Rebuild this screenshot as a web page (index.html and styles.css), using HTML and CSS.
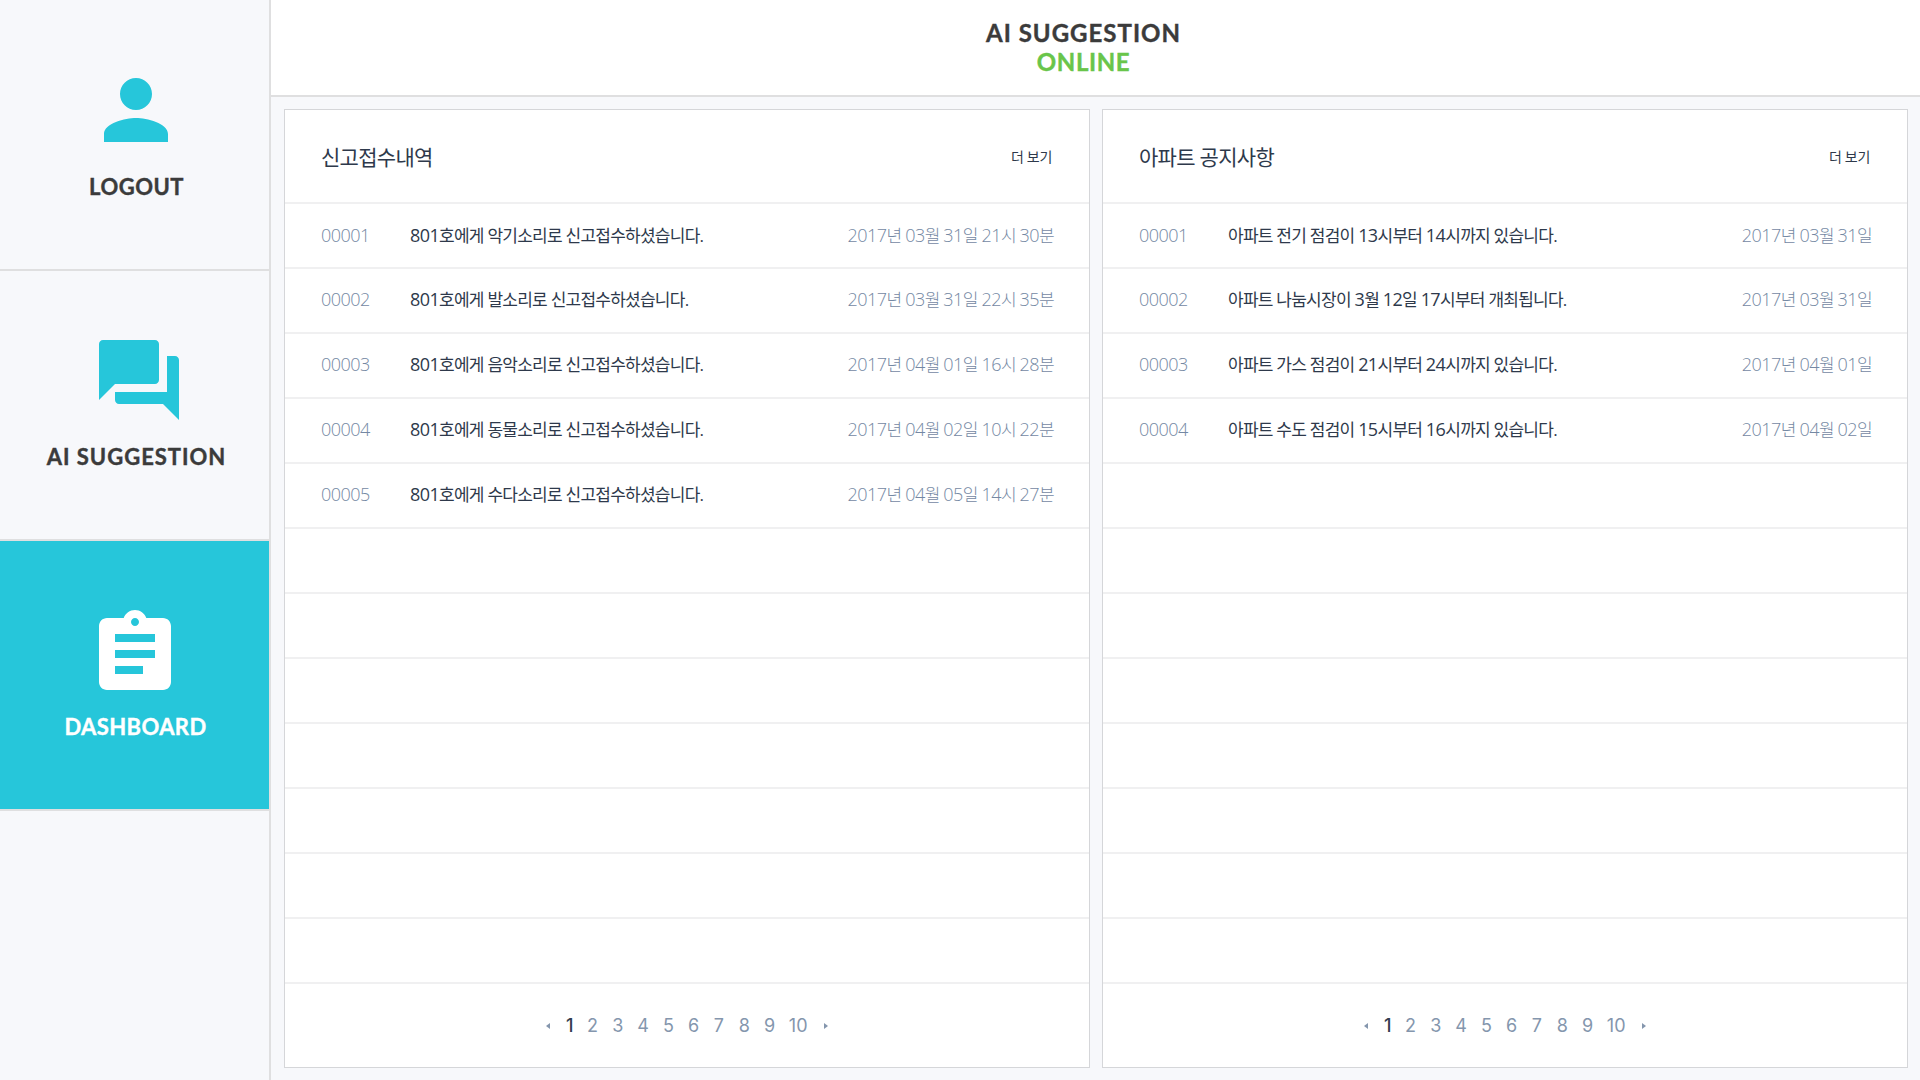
FILE: index.html
```html
<!DOCTYPE html>
<html lang="ko">
<head>
<meta charset="utf-8">
<title>AI Suggestion – Dashboard</title>
<link rel="stylesheet" href="styles.css">
</head>
<body>
<div class="app">
  <nav class="sidebar">
    <a class="nav-item nav-logout">
      <svg class="nav-icon" viewBox="0 0 24 24"><path d="M12 12c2.21 0 4-1.79 4-4s-1.79-4-4-4-4 1.79-4 4 1.79 4 4 4zm0 2c-2.67 0-8 1.34-8 4v2h16v-2c0-2.66-5.33-4-8-4z"/></svg>
      <span class="nav-label">LOGOUT</span>
    </a>
    <a class="nav-item nav-suggestion">
      <svg class="nav-icon" viewBox="0 0 24 24"><path d="M21 6h-2v9H6v2c0 .55.45 1 1 1h11l4 4V7c0-.55-.45-1-1-1zm-4 6V3c0-.55-.45-1-1-1H3c-.55 0-1 .45-1 1v14l4-4h10c.55 0 1-.45 1-1z"/></svg>
      <span class="nav-label">AI SUGGESTION</span>
    </a>
    <a class="nav-item nav-dashboard active">
      <svg class="nav-icon" viewBox="0 0 24 24"><path d="M19 3h-4.18C14.4 1.84 13.3 1 12 1c-1.3 0-2.4.84-2.82 2H5c-1.1 0-2 .9-2 2v14c0 1.1.9 2 2 2h14c1.1 0 2-.9 2-2V5c0-1.1-.9-2-2-2zm-7 0c.55 0 1 .45 1 1s-.45 1-1 1-1-.45-1-1 .45-1 1-1zm2 14H7v-2h7v2zm3-4H7v-2h10v2zm0-4H7V7h10v2z"/></svg>
      <span class="nav-label">DASHBOARD</span>
    </a>
  </nav>
  <div class="main">
    <header class="topbar">
      <div class="brand">AI SUGGESTION</div>
      <div class="status">ONLINE</div>
    </header>
    <main class="panels">
      <section class="panel">
        <div class="panel-head"><h2>신고접수내역</h2><a class="more">더 보기</a></div>
        <ul class="rows">
          <li><span class="no">00001</span><span class="subject"><b>801</b>호에게 악기소리로 신고접수하셨습니다.</span><span class="date"><b>2017</b>년 <b>03</b>월 <b>31</b>일 <b>21</b>시 <b>30</b>분</span></li>
          <li><span class="no">00002</span><span class="subject"><b>801</b>호에게 발소리로 신고접수하셨습니다.</span><span class="date"><b>2017</b>년 <b>03</b>월 <b>31</b>일 <b>22</b>시 <b>35</b>분</span></li>
          <li><span class="no">00003</span><span class="subject"><b>801</b>호에게 음악소리로 신고접수하셨습니다.</span><span class="date"><b>2017</b>년 <b>04</b>월 <b>01</b>일 <b>16</b>시 <b>28</b>분</span></li>
          <li><span class="no">00004</span><span class="subject"><b>801</b>호에게 동물소리로 신고접수하셨습니다.</span><span class="date"><b>2017</b>년 <b>04</b>월 <b>02</b>일 <b>10</b>시 <b>22</b>분</span></li>
          <li><span class="no">00005</span><span class="subject"><b>801</b>호에게 수다소리로 신고접수하셨습니다.</span><span class="date"><b>2017</b>년 <b>04</b>월 <b>05</b>일 <b>14</b>시 <b>27</b>분</span></li>
          <li></li><li></li><li></li><li></li><li></li><li></li><li></li>
        </ul>
        <div class="pager"><i class="prev"></i><a class="current">1</a><a>2</a><a>3</a><a>4</a><a>5</a><a>6</a><a>7</a><a>8</a><a>9</a><a class="wide">10</a><i class="next"></i></div>
      </section>
      <section class="panel">
        <div class="panel-head"><h2>아파트 공지사항</h2><a class="more">더 보기</a></div>
        <ul class="rows">
          <li><span class="no">00001</span><span class="subject">아파트 전기 점검이 <b>13</b>시부터 <b>14</b>시까지 있습니다.</span><span class="date"><b>2017</b>년 <b>03</b>월 <b>31</b>일</span></li>
          <li><span class="no">00002</span><span class="subject">아파트 나눔시장이 <b>3</b>월 <b>12</b>일 <b>17</b>시부터 개최됩니다.</span><span class="date"><b>2017</b>년 <b>03</b>월 <b>31</b>일</span></li>
          <li><span class="no">00003</span><span class="subject">아파트 가스 점검이 <b>21</b>시부터 <b>24</b>시까지 있습니다.</span><span class="date"><b>2017</b>년 <b>04</b>월 <b>01</b>일</span></li>
          <li><span class="no">00004</span><span class="subject">아파트 수도 점검이 <b>15</b>시부터 <b>16</b>시까지 있습니다.</span><span class="date"><b>2017</b>년 <b>04</b>월 <b>02</b>일</span></li>
          <li></li><li></li><li></li><li></li><li></li><li></li><li></li><li></li>
        </ul>
        <div class="pager"><i class="prev"></i><a class="current">1</a><a>2</a><a>3</a><a>4</a><a>5</a><a>6</a><a>7</a><a>8</a><a>9</a><a class="wide">10</a><i class="next"></i></div>
      </section>
    </main>
  </div>
</div>
</body>
</html>
```
FILE: styles.css
```css
* { box-sizing: border-box; }

body {
  margin: 0;
  background: #f7f8fb;
  color: #2e394b;
  font-family: "Open Sans", "Noto Sans CJK KR", sans-serif;
}

.app { display: flex; width: 1920px; height: 1080px; overflow: hidden; }

.sidebar {
  width: 271px;
  flex: none;
  border-right: 2px solid #dfdfe0;
}

.nav-item {
  display: flex;
  flex-direction: column;
  height: 270px;
  border-bottom: 2px solid #dfdfe0;
  fill: #26c6da;
  color: #3b3b3b;
}
.nav-logout { height: 271px; }
.nav-icon { width: 96px; height: 96px; flex: none; }
.nav-logout .nav-icon { margin: 62px 0 0 88px; }
.nav-suggestion .nav-icon { margin: 61px 0 0 91px; }
.nav-dashboard .nav-icon { margin: 65px 0 0 87px; }
.nav-label {
  margin-top: auto;
  margin-bottom: 66px;
  padding-left: 4px;
  align-self: center;
  font: 700 22px/32px Lato, sans-serif;
  letter-spacing: 1px;
  white-space: nowrap;
  -webkit-text-stroke: 0.4px currentColor;
}
.nav-logout .nav-label { letter-spacing: 0.5px; }
.nav-dashboard .nav-label { padding-left: 2px; letter-spacing: 0.4px; }
.nav-item.active { background: #26c6da; fill: #fff; color: #fff; }

.main { flex: 1; display: flex; flex-direction: column; }

.topbar {
  height: 97px;
  padding: 18px 24px 0 0;
  background: #fff;
  border-bottom: 2px solid #dfdfe0;
  text-align: center;
  font: 700 24px/29px Lato, sans-serif;
  letter-spacing: 1px;
  color: #3b3b3b;
  -webkit-text-stroke: 0.4px currentColor;
}
.status { color: #69c54a; letter-spacing: 0.6px; }

.panels {
  flex: 1;
  display: flex;
  gap: 12px;
  padding: 12px 12px 12px 13px;
}
.panel {
  flex: 1;
  display: flex;
  flex-direction: column;
  background: #fff;
  border: 1px solid #d5d6d9;
}
.panel-head {
  display: flex;
  justify-content: space-between;
  align-items: center;
  height: 94px;
  padding: 0 37px 0 36px;
  border-bottom: 2px solid #f0f0f1;
}
.panel-head h2 {
  margin: 0;
  font-size: 21px;
  font-weight: 400;
  letter-spacing: -0.7px;
}
.more { padding-bottom: 1px; font-size: 14px; letter-spacing: -0.3px; }

.rows { margin: 0; padding: 0; list-style: none; }
.rows li {
  display: flex;
  align-items: baseline;
  height: 65px;
  padding: 0 35px 0 36px;
  border-bottom: 2px solid #f0f0f1;
  font-size: 17px;
  line-height: 62px;
  letter-spacing: -0.75px;
}
.rows li + li { line-height: 60px; }
.rows b { font-size: 18px; font-weight: inherit; letter-spacing: -0.6px; }
.no { width: 89px; font-size: 18px; font-weight: 300; letter-spacing: -0.55px; color: #7488a3; }
.date { margin-left: auto; font-weight: 300; color: #7488a3; }
.date b { letter-spacing: -0.5px; }

.pager {
  flex: 1;
  display: flex;
  align-items: center;
  justify-content: center;
  font: 400 18px/24px Inter, sans-serif;
  color: #8496ad;
}
.pager a { width: 25.3px; text-align: center; }
.pager .current { width: 20px; color: #333e50; font-weight: 500; }
.pager .wide { width: 32px; }
.pager i { border: 3px solid transparent; border-width: 3px 0; }
.pager .prev { border-right: 4px solid #8496ad; margin-right: 10px; }
.pager .next { border-left: 4px solid #8496ad; margin-left: 10px; }
```
